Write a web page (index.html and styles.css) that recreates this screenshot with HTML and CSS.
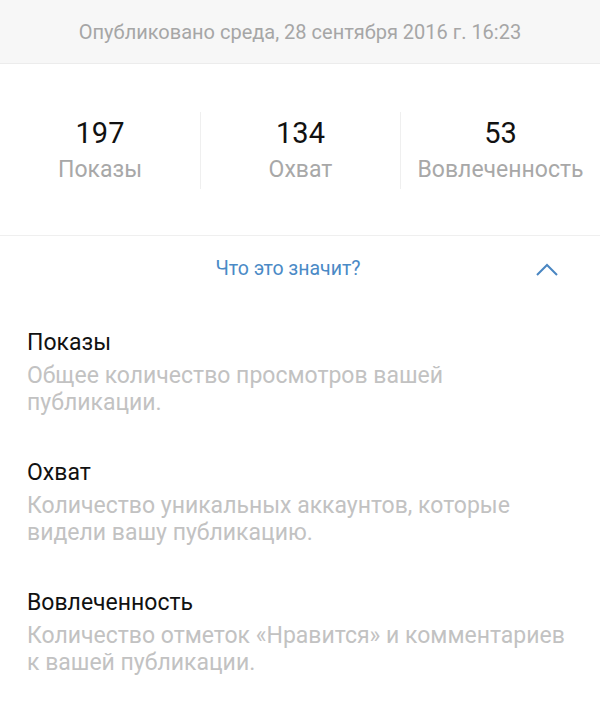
FILE: index.html
```html
<!DOCTYPE html>
<html lang="ru">
<head>
<meta charset="utf-8">
<link rel="stylesheet" href="styles.css">
</head>
<body>
<header class="published">Опубликовано среда, 28 сентября 2016 г. 16:23</header>
<section class="stats">
  <div class="stat"><div class="num">197</div><div class="label">Показы</div></div>
  <div class="stat"><div class="num">134</div><div class="label">Охват</div></div>
  <div class="stat"><div class="num">53</div><div class="label">Вовлеченность</div></div>
</section>
<div class="toggle">
  <span class="toggle-text">Что это значит?</span>
  <svg class="chevron" width="24" height="14" viewBox="0 0 24 14"><path d="M2 12 L12 2 L22 12" fill="none" stroke="#4a86c2" stroke-width="2"/></svg>
</div>
<section class="defs">
  <div class="def">
    <div class="def-title">Показы</div>
    <div class="def-desc">Общее количество просмотров вашей<br>публикации.</div>
  </div>
  <div class="def">
    <div class="def-title">Охват</div>
    <div class="def-desc">Количество уникальных аккаунтов, которые<br>видели вашу публикацию.</div>
  </div>
  <div class="def">
    <div class="def-title">Вовлеченность</div>
    <div class="def-desc">Количество отметок «Нравится» и комментариев<br>к вашей публикации.</div>
  </div>
</section>
</body>
</html>
```
FILE: styles.css
```css
html, body { margin: 0; padding: 0; background: #fff; }
body { font-family: Roboto, "Noto Sans", sans-serif; width: 600px; }
.published {
  height: 63px;
  background: #f7f7f7;
  border-bottom: 1px solid #ececec;
  color: #a6a6a6;
  font-size: 20px;
  display: flex; align-items: center; justify-content: center;
}
.stats {
  display: grid;
  grid-template-columns: repeat(3, 1fr);
  padding: 48px 0 46px;
  border-bottom: 1px solid #efefef;
}
.stat {
  display: flex; flex-direction: column; align-items: center;
  border-left: 1px solid #efefef;
  padding-top: 3px;
}
.stat:first-child { border-left: none; }
.num { font-size: 29px; color: #111; line-height: 36px; }
.label { font-size: 23px; color: #a8a8a8; line-height: 38px; }
.toggle {
  position: relative;
  height: 64px;
  display: flex; align-items: center; justify-content: center;
  padding-right: 24px;
}
.toggle-text { color: #4a8ac6; font-size: 19.5px; }
.chevron { position: absolute; right: 41px; top: 27px; }
.defs { padding: 24px 27px 0; }
.def { margin-bottom: 38px; }
.def-title { font-size: 23px; color: #111; line-height: 38px; }
.def-desc { font-size: 23px; color: #c2c2c2; line-height: 27px; }
```
